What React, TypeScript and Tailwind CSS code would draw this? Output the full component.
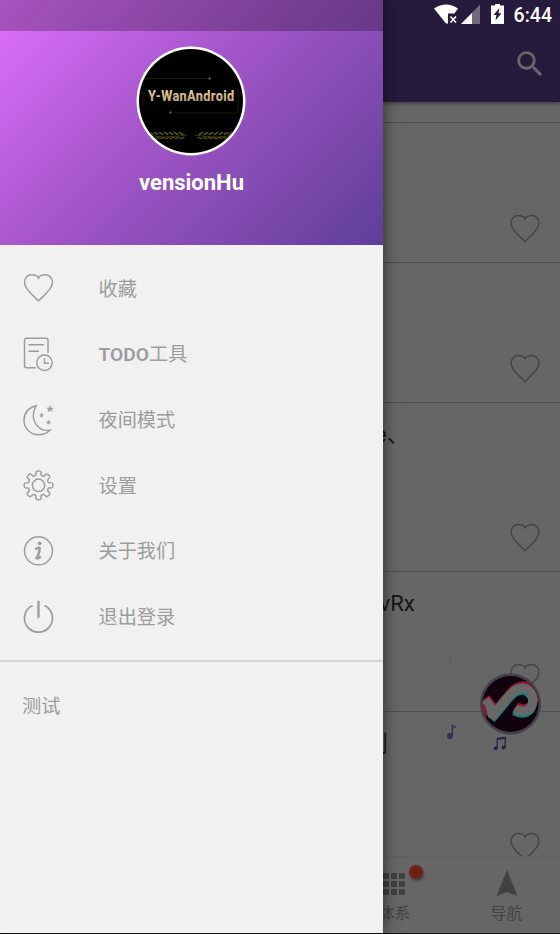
import React from "react";

const gearPath = (() => {
  const pts: string[] = [];
  for (let i = 0; i < 8; i++) {
    const a = (i * Math.PI) / 4;
    const at = (r: number, d: number) =>
      `${(15 + r * Math.sin(a + d)).toFixed(2)} ${(15 - r * Math.cos(a + d)).toFixed(2)}`;
    pts.push(`${i ? "L" : "M"}${at(10.6, -0.25)}L${at(13.7, -0.18)}Q${at(14.5, -0.16)} ${at(14.4, 0)}Q${at(14.5, 0.16)} ${at(13.7, 0.18)}L${at(10.6, 0.25)}Q${at(9.7, 0.39)} ${at(10.6, 0.53)}`);
  }
  return pts.join("") + "Z";
})();

const HEART = "M15 27.5C10 22.5 1 16 1 9.2C1 4.8 4.2 1.5 8 1.5C11.2 1.5 13.8 2.2 15 4.8C16.2 2.2 18.8 1.5 22 1.5C25.8 1.5 29 4.8 29 9.2C29 16 20 22.5 15 27.5Z";

function Heart() {
  return (
    <svg viewBox="0 0 30 30" className="h-[30px] w-[30px] shrink-0" fill="none" stroke="currentColor" strokeWidth="1.45">
      <path d={HEART} />
    </svg>
  );
}

function Icon({ children }: { children: React.ReactNode }) {
  return (
    <svg viewBox="0 0 30 30" className="h-[30px] w-[30px] shrink-0 overflow-visible" fill="none" stroke="currentColor" strokeWidth="1.45">
      <g transform="translate(.5 .3)">{children}</g>
    </svg>
  );
}

const STAR = "M0-1L.25-.3L1-.3L.4.15L.62.9L0 .45L-.62.9L-.4.15L-1-.3L-.25-.3Z";

const items = [
  { label: "收藏", icon: <Icon><path d={HEART} /></Icon> },
  {
    label: <><b className="font-semibold">TODO</b>工具</>,
    icon: (
      <Icon>
        <path d="M12.5 29.5H3.2Q1 29.500 1 27.300V2.200Q1 0 3.200 0H22.500Q24.500 0 24.500 2V15M5 6.500H20.500M5 13H15.500" transform="translate(0 -1)" />
        <circle cx="21" cy="23.500" r="7.700" />
        <path d="M21 19V24H25.500" />
      </Icon>
    ),
  },
  {
    label: "夜间模式",
    icon: (
      <Icon>
        <path d="M12.500 .5C4.500 2.500 .5 8 .5 15.200C.5 23.500 7.500 29.500 15 29.500C20 29.500 23.500 28 26.500 25C15 26.500 5 15 12.500 .5Z" />
        <g fill="currentColor" stroke="none">
          <path d={STAR} transform="translate(26.500 3.500) scale(3.900)" />
          <path d={STAR} transform="translate(18 10) scale(2.700)" />
          <path d={STAR} transform="translate(25 17) scale(2.700)" />
        </g>
      </Icon>
    ),
  },
  { label: "设置", icon: <Icon><path d={gearPath} strokeLinejoin="round" /><circle cx="15" cy="15" r="6.200" /></Icon> },
  {
    label: "关于我们",
    icon: (
      <Icon>
        <circle cx="15" cy="14.500" r="14" />
        <circle cx="16.200" cy="7" r="1.900" fill="currentColor" stroke="none" />
        <path d="M11.500 12.800C13.500 12.300 15 11.300 16.200 11.600C17.500 12.300 13 21 14 22C14.800 22.500 16 21.300 17.200 20M11.800 21.800L14.200 22" strokeWidth="2.500" />
      </Icon>
    ),
  },
  {
    label: "退出登录",
    icon: (
      <Icon>
        <path d="M9 3.200A14 14 0 1 0 21 3.200" strokeWidth="1.700" />
        <path d="M15-1.500V15.500" strokeWidth="2.300" />
      </Icon>
    ),
  },
];

function Laurel() {
  return (
    <g>
      <path d="M0 5Q14 9 38 5" fill="none" stroke="#4a4519" strokeWidth=".8" />
      {[0, 5, 10, 15, 20, 25, 30].map((x) => (
        <g key={x} fill="#514a1f">
          <ellipse cx={x + 2} cy={3.4} rx="3" ry=".9" transform={`rotate(28 ${x + 2} 3.4)`} />
          <ellipse cx={x + 3} cy={8} rx="3" ry=".9" transform={`rotate(-18 ${x + 3} 8)`} />
        </g>
      ))}
    </g>
  );
}

function Avatar() {
  return (
    <svg viewBox="0 0 110 110" className="h-[110px] w-[110px] shrink-0">
      <defs>
        <clipPath id="avatar"><circle cx="55" cy="55" r="52" /></clipPath>
        <linearGradient id="gold" x1="0" x2="0" y1="0" y2="1">
          <stop offset="0" stopColor="#f4dda6" /><stop offset="1" stopColor="#b59868" />
        </linearGradient>
      </defs>
      <circle cx="55" cy="55" r="54.500" fill="#fff" />
      <circle cx="55" cy="55" r="52" fill="#000" />
      <g clipPath="url(#avatar)">
        <path d="M8 32.500H72M38 67H102V42M7 45V60" stroke="#1c1806" strokeWidth="1" fill="none" />
        <circle cx="73.500" cy="32.500" r="1.200" fill="#6b5b12" />
        <circle cx="34.500" cy="66.500" r="1.200" fill="#6b5b12" />
        <text transform="translate(12 55.200) scale(.82 1)" textLength="105" lengthAdjust="spacing" fontFamily="Roboto, sans-serif" fontWeight="800" fontSize="15.500" fill="url(#gold)">Y-WanAndroid</text>
        <g transform="translate(13 84)"><Laurel /></g>
        <g transform="translate(97 84) scale(-1 1)"><Laurel /></g>
      </g>
    </svg>
  );
}

function Drawer() {
  return (
    <aside className="z-10 flex h-[933px] w-[383px] shrink-0 flex-col bg-[#f1f1f1] shadow-[0_0_14px_rgba(0,0,0,0.6)]">
      <header className="flex h-[244.500px] shrink-0 flex-col items-center bg-[linear-gradient(135deg,#e070ff_0%,#a355c8_45%,#5e3f98_100%)]">
        <div className="h-[31px] w-full shrink-0 bg-black/25" />
        <div className="mt-[15px] mr-px flex h-[110px]"><Avatar /></div>
        <h1 className="mt-3 text-[22px] leading-[30px] font-bold text-white">vensionHu</h1>
      </header>
      <nav className="mt-[11px] flex flex-col text-[#9c9c9c]">
        {items.map((it, i) => (
          <div key={i} className="flex h-[65.700px] items-center gap-[45.500px] pl-[23px]">
            {it.icon}
            <span className="pt-[2.500px] text-[19.200px] leading-7">{it.label}</span>
          </div>
        ))}
      </nav>
      <div className="mt-[10.500px] h-[1.500px] bg-[#d4d4d4]" />
      <p className="mt-[31px] pl-[22px] text-[19.200px] leading-7 text-[#9c9c9c]">测试</p>
    </aside>
  );
}

function StatusBar() {
  return (
    <div className="flex h-[31px] items-center justify-end pr-2 text-white">
      <svg viewBox="0 0 72 24" className="mr-[8px] h-6 w-[72px]" fill="#fff">
        <path d="M0 4.500Q12-3.500 24 4.500L20.500 9.500H14V19.500L12 19.500Z" />
        <path d="M16.500 12.500L22 18.500M22 12.500L16.500 18.500" stroke="#fff" strokeWidth="1.700" />
        <path d="M46 .5V20H27Z" opacity=".35" />
        <path d="M38 9V20H27Z" />
        <path d="M61 0H66V1.500H70V20H57V1.500H61Z" />
        <path d="M65.500 4L59.500 11H62.500L61.500 16.500L67.500 9.300H64.500Z" fill="#261a3d" />
      </svg>
      <time className="text-[19.500px] font-medium">6:44</time>
    </div>
  );
}

function Card({ className, children }: { className: string; children?: React.ReactNode }) {
  return (
    <article className={"flex shrink-0 flex-col justify-between border-t-[1.500px] border-[#4e4e4e] " + className}>
      <div className="mt-[15px] flex h-8 items-center text-[22px] whitespace-nowrap text-[#151515]">{children}</div>
      <div className="flex justify-end pr-[20.500px] pb-[18.500px] text-[#444]"><Heart /></div>
    </article>
  );
}

const LOGO = "M45 50L54.500 63M51.500 67L69 46C75 39 80 37 85 38.500C95.500 42 95.500 57 86 60.500Q80 62 75 58.500";

function FloatingPlayer() {
  return (
    <svg viewBox="0 0 120 110" className="absolute top-[650px] left-[440px] z-20 h-[110px] w-[120px]">
      <defs><clipPath id="disc"><circle cx="70.500" cy="54" r="28" /></clipPath></defs>
      <circle cx="70.500" cy="54" r="30.500" fill="#42404b" />
      <circle cx="70.500" cy="54" r="28" fill="#12020d" />
      <g clipPath="url(#disc)" fill="none" strokeWidth="9" strokeLinejoin="round">
        <path d={LOGO} stroke="#8c1c35" transform="translate(.8 -2.200)" />
        <path d={LOGO} stroke="#12807a" transform="translate(-.3 2.200)" />
        <path d={LOGO} stroke="#686868" />
        <path d="M43 50L48 67L54 71L52 56Z" fill="#686868" />
        <path d="M41 54Q47 59 44 67" stroke="#8c1c35" strokeWidth="4" />
      </g>
      <g fill="#3a2f59" stroke="#3a2f59">
        <circle cx="10" cy="86" r="2.700" /><path d="M12.300 86V75.500L16 77.500" fill="none" strokeWidth="1.600" />
      </g>
      <g fill="#292047" stroke="#292047">
        <circle cx="55.700" cy="98.300" r="1.500" /><circle cx="63.500" cy="97.500" r="1.500" />
        <path d="M57.300 98.300V88.800L65.200 87.500V97.500" fill="none" strokeWidth="1.300" /><path d="M57.300 89L65.300 87.800" strokeWidth="2" />
      </g>
      <path d="M10.500 15V6Q13 4 11.500 8Q8 11 9 13Q13 14 11 11" fill="none" stroke="#606060" />
    </svg>
  );
}

export default function App() {
  return (
    <div className="relative flex h-[934px] w-[560px] overflow-hidden bg-[#111] font-[Roboto,'Noto_Sans_CJK_SC',sans-serif]">
      <Drawer />
      <main className="flex h-[933px] w-[177px] flex-col bg-[#666]">
        <header className="z-[1] h-[102px] shrink-0 bg-[#261a3d] shadow-[0_1px_4px_rgba(0,0,0,0.5)]">
          <StatusBar />
          <div className="flex h-[65px] items-center justify-end pr-[13px]">
            <svg viewBox="0 0 24 24" className="h-[34px] w-[34px]" fill="#696969">
              <path d="M15.500 14h-.79l-.28-.27A6.470 6.470 0 0 0 16 9.500 6.500 6.500 0 1 0 9.500 16c1.610 0 3.090-.59 4.230-1.570l.27.28v.79l5 4.990L20.490 19l-4.990-5zm-6 0C7.010 14 5 11.990 5 9.500S7.010 5 9.500 5 14 7.010 14 9.500 11.990 14 9.500 14z" />
            </svg>
          </div>
        </header>
        <section className="flex h-[754px] shrink-0 flex-col overflow-hidden pt-5">
          <Card className="h-[140px]" />
          <Card className="h-[140px]" />
          <Card className="h-[169px]"><span className="-ml-[8px]">e、</span></Card>
          <Card className="h-[140px]"><span className="-ml-[3.500px]">vRx</span></Card>
          <Card className="h-[169px]"><span className="-ml-[17px]">则</span></Card>
        </section>
        <footer className="flex h-[77px] shrink-0 overflow-hidden border-t border-[#606060] text-[#444]">
          <div className="-ml-[17px] flex w-[56px] shrink-0 flex-col items-center">
            <svg viewBox="0 0 22 22" className="mt-4 h-[22px] w-[22px]" fill="#414141">
              {[0, 8, 16].flatMap((x) => [0, 8, 16].map((y) => <rect key={x + "-" + y} x={x} y={y} width="6" height="6" />))}
            </svg>
            <span className="mt-[7px] pl-px text-base leading-6">体系</span>
          </div>
          <span className="-ml-[13px] mt-2 h-[14px] w-[14px] rounded-full bg-[#6d211b] shadow-[1px_2px_3px_rgba(0,0,0,0.35)]" />
          <div className="ml-auto flex w-[107px] flex-col items-center">
            <svg viewBox="0 0 22 26" className="mt-[13px] h-[26px] w-[22px]" fill="#414141"><path d="M11 0L21.500 26L11 22L.5 26Z" /></svg>
            <span className="mt-[6px] text-base leading-6">导航</span>
          </div>
        </footer>
      </main>
      <FloatingPlayer />
    </div>
  );
}
